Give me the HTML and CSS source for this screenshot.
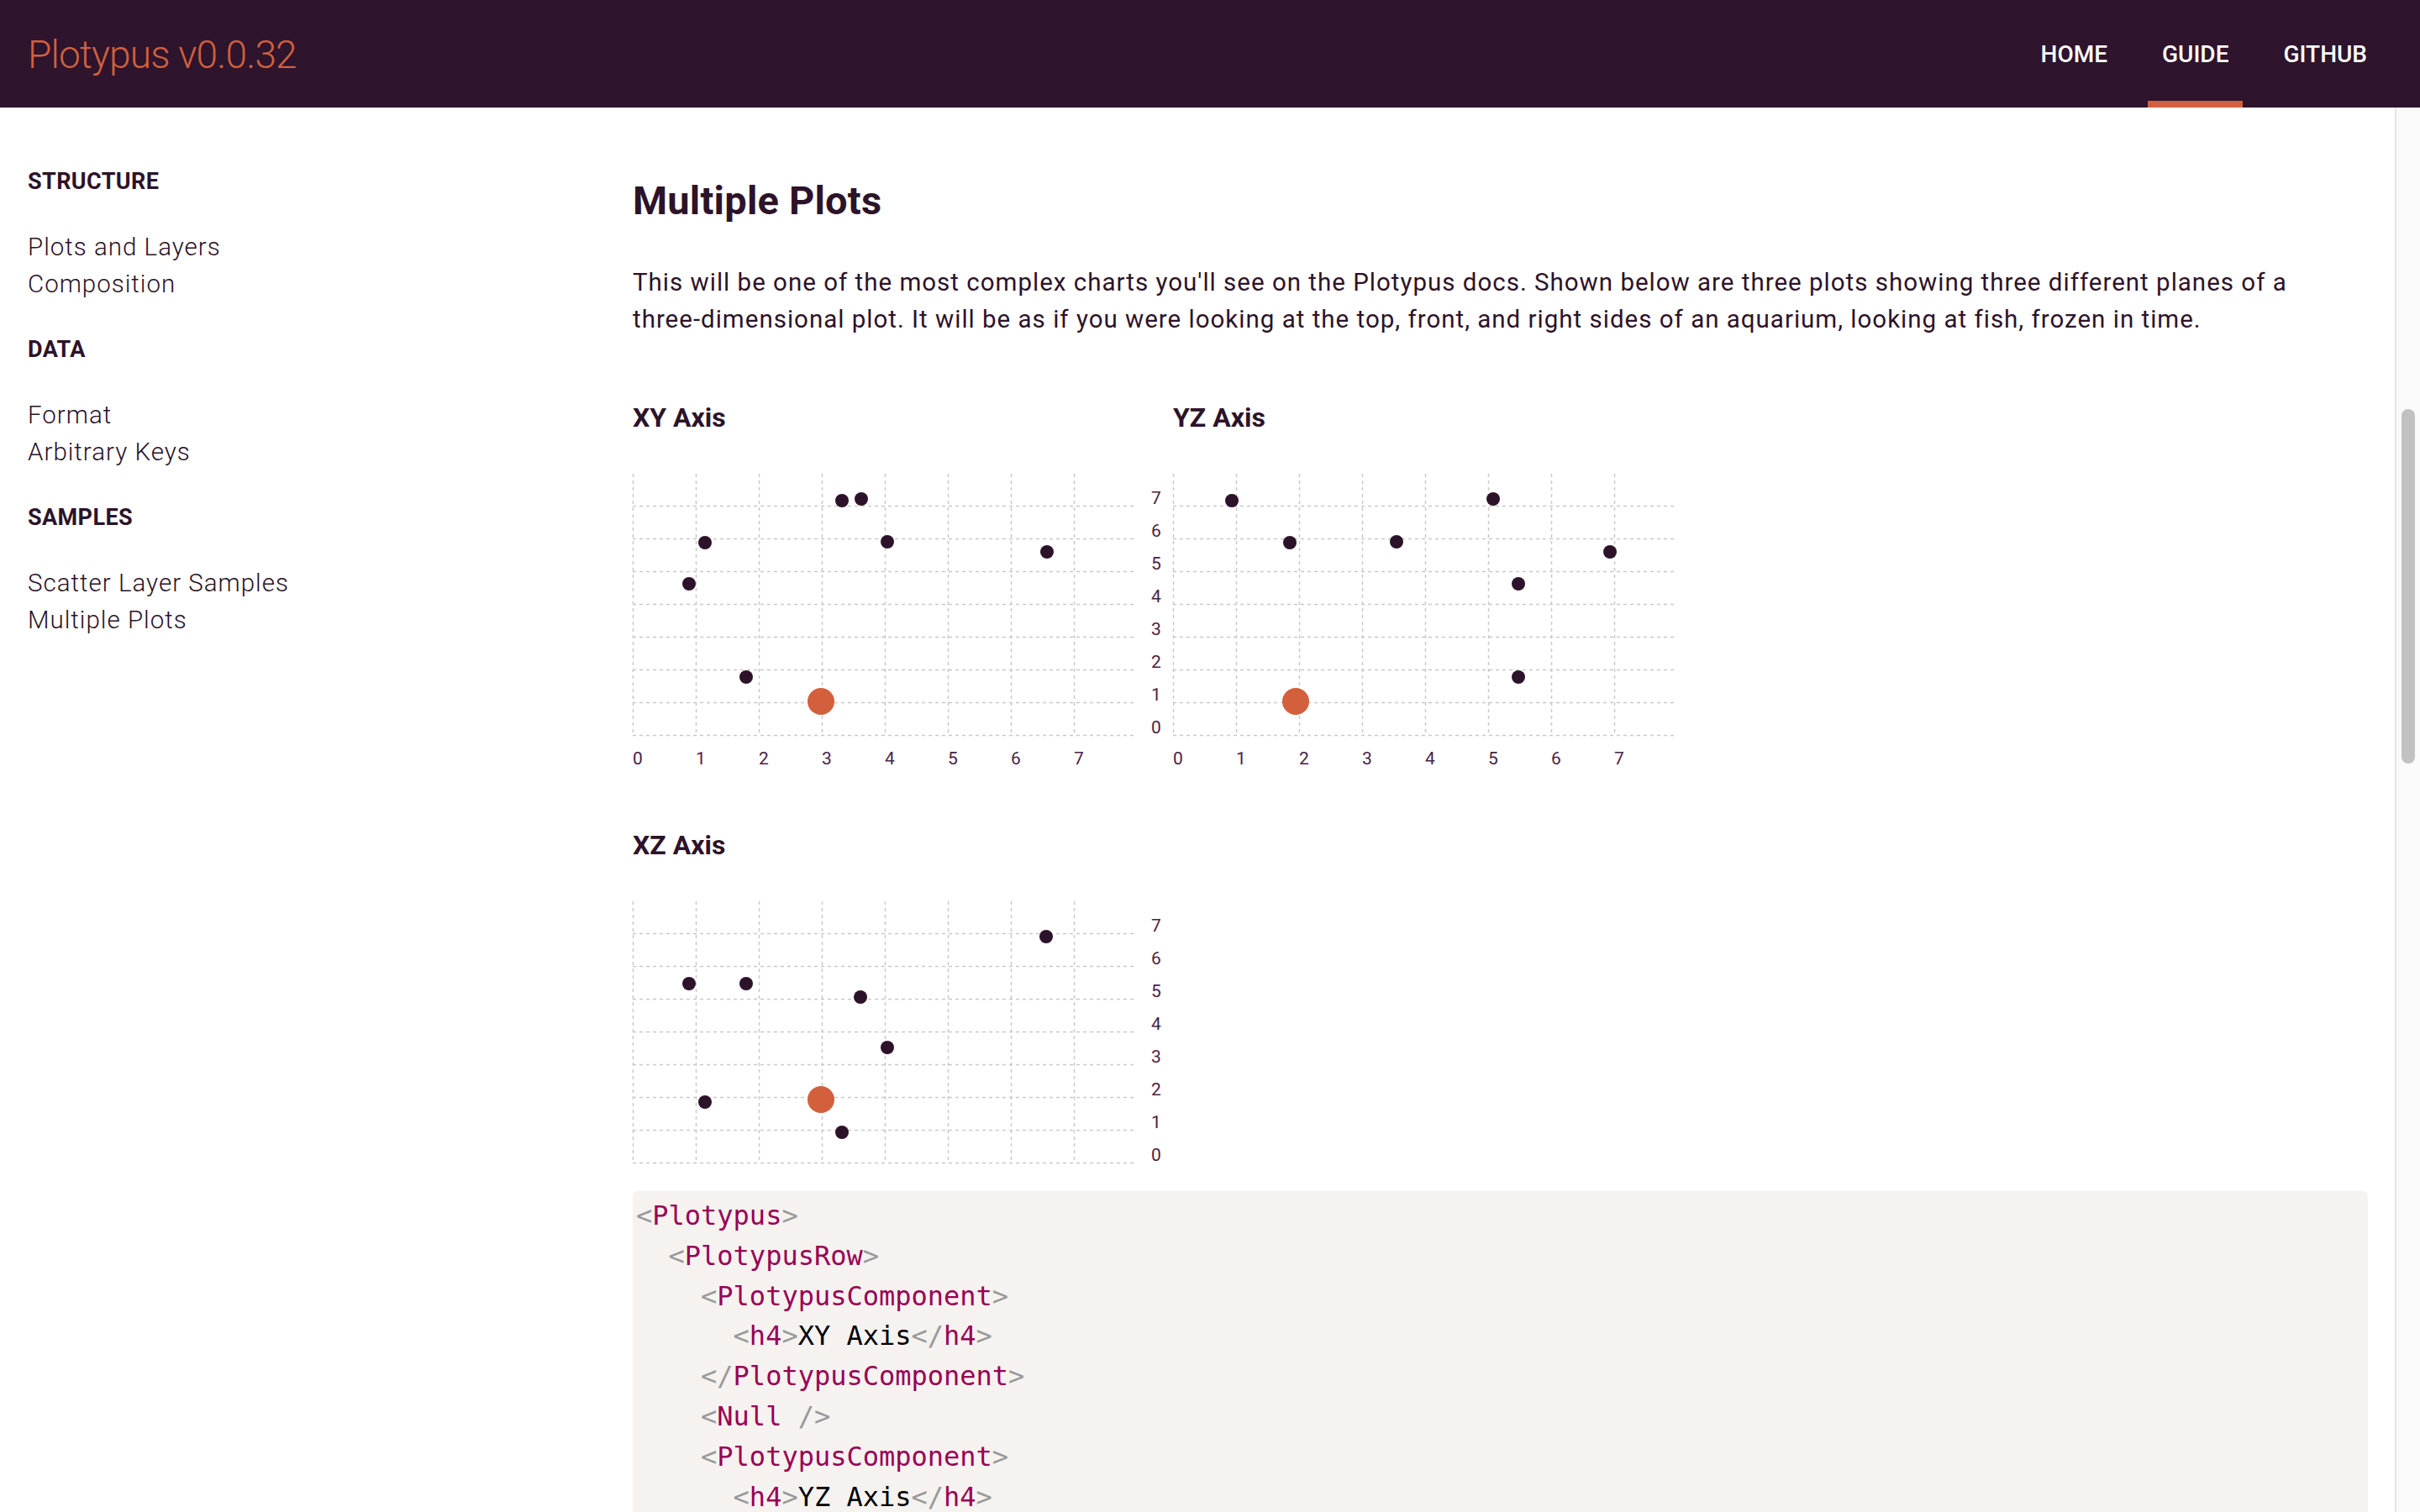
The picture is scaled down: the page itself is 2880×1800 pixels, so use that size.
FILE: index.html
```html
<!DOCTYPE html>
<html lang="en">
<head>
<meta charset="utf-8">
<title>Plotypus – Multiple Plots</title>
<link rel="stylesheet" href="styles.css">
</head>
<body>
<div class="app">
  <header class="topbar">
    <div class="logo">Plotypus v0.0.32</div>
    <nav class="nav">
      <a class="nav-item">HOME</a>
      <a class="nav-item active">GUIDE</a>
      <a class="nav-item">GITHUB</a>
    </nav>
  </header>
  <div class="below">
    <div class="content">
      <aside class="sidebar">
        <div class="group">
          <div class="group-title">STRUCTURE</div>
          <ul class="group-list">
            <li>Plots and Layers</li>
            <li>Composition</li>
          </ul>
        </div>
        <div class="group">
          <div class="group-title">DATA</div>
          <ul class="group-list">
            <li>Format</li>
            <li>Arbitrary Keys</li>
          </ul>
        </div>
        <div class="group">
          <div class="group-title">SAMPLES</div>
          <ul class="group-list">
            <li>Scatter Layer Samples</li>
            <li>Multiple Plots</li>
          </ul>
        </div>
      </aside>
      <main class="main">
        <h1 class="title">Multiple Plots</h1>
        <p class="lead">This will be one of the most complex charts you'll see on the Plotypus docs. Shown below are three plots showing three different planes of a <span class="nowrap">three-dimensional</span> plot. It will be as if you were looking at the top, front, and right sides of an aquarium, looking at fish, frozen in time.</p>

        <div class="plots">
          <div class="plot-row">
            <div class="plot-cell">
              <h4 class="plot-title">XY Axis</h4>
              <svg class="plot" width="643" height="356" viewBox="0 0 643 356">
                <g class="grid">
                  <line x1="0.5" y1="0" x2="0.5" y2="312"/><line x1="75.5" y1="0" x2="75.5" y2="312"/><line x1="150.5" y1="0" x2="150.5" y2="312"/><line x1="225.5" y1="0" x2="225.5" y2="312"/><line x1="300.5" y1="0" x2="300.5" y2="312"/><line x1="375.5" y1="0" x2="375.5" y2="312"/><line x1="450.5" y1="0" x2="450.5" y2="312"/><line x1="525.5" y1="0" x2="525.5" y2="312"/>
                  <line x1="0" y1="311.5" x2="597" y2="311.5"/><line x1="0" y1="272.5" x2="597" y2="272.5"/><line x1="0" y1="233.5" x2="597" y2="233.5"/><line x1="0" y1="194.5" x2="597" y2="194.5"/><line x1="0" y1="155.5" x2="597" y2="155.5"/><line x1="0" y1="116.5" x2="597" y2="116.5"/><line x1="0" y1="77.5" x2="597" y2="77.5"/><line x1="0" y1="38.5" x2="597" y2="38.5"/>
                </g>
                <g class="xlabels">
                  <text x="0" y="346">0</text><text x="75" y="346">1</text><text x="150" y="346">2</text><text x="225" y="346">3</text><text x="300" y="346">4</text><text x="375" y="346">5</text><text x="450" y="346">6</text><text x="525" y="346">7</text>
                </g>
                <g class="ylabels">
                  <text x="617" y="309">0</text><text x="617" y="270">1</text><text x="617" y="231">2</text><text x="617" y="192">3</text><text x="617" y="153">4</text><text x="617" y="114">5</text><text x="617" y="75">6</text><text x="617" y="36">7</text>
                </g>
                <g class="dots">
                  <circle cx="249" cy="32" r="8"/><circle cx="272" cy="30" r="8"/><circle cx="86" cy="82" r="8"/><circle cx="303" cy="81" r="8"/><circle cx="493" cy="93" r="8"/><circle cx="67" cy="131" r="8"/><circle cx="135" cy="242" r="8"/>
                </g>
                <circle class="hot" cx="224" cy="271" r="16"/>
              </svg>
            </div>
            <div class="plot-cell">
              <h4 class="plot-title">YZ Axis</h4>
              <svg class="plot" width="643" height="356" viewBox="0 0 643 356">
                <g class="grid">
                  <line x1="0.5" y1="0" x2="0.5" y2="312"/><line x1="75.5" y1="0" x2="75.5" y2="312"/><line x1="150.5" y1="0" x2="150.5" y2="312"/><line x1="225.5" y1="0" x2="225.5" y2="312"/><line x1="300.5" y1="0" x2="300.5" y2="312"/><line x1="375.5" y1="0" x2="375.5" y2="312"/><line x1="450.5" y1="0" x2="450.5" y2="312"/><line x1="525.5" y1="0" x2="525.5" y2="312"/>
                  <line x1="0" y1="311.5" x2="600" y2="311.5"/><line x1="0" y1="272.5" x2="600" y2="272.5"/><line x1="0" y1="233.5" x2="600" y2="233.5"/><line x1="0" y1="194.5" x2="600" y2="194.5"/><line x1="0" y1="155.5" x2="600" y2="155.5"/><line x1="0" y1="116.5" x2="600" y2="116.5"/><line x1="0" y1="77.5" x2="600" y2="77.5"/><line x1="0" y1="38.5" x2="600" y2="38.5"/>
                </g>
                <g class="xlabels">
                  <text x="0" y="346">0</text><text x="75" y="346">1</text><text x="150" y="346">2</text><text x="225" y="346">3</text><text x="300" y="346">4</text><text x="375" y="346">5</text><text x="450" y="346">6</text><text x="525" y="346">7</text>
                </g>
                <g class="dots">
                  <circle cx="70" cy="32" r="8"/><circle cx="381" cy="30" r="8"/><circle cx="139" cy="82" r="8"/><circle cx="266" cy="81" r="8"/><circle cx="520" cy="93" r="8"/><circle cx="411" cy="131" r="8"/><circle cx="411" cy="242" r="8"/>
                </g>
                <circle class="hot" cx="146" cy="271" r="16"/>
              </svg>
            </div>
          </div>
          <div class="plot-row">
            <div class="plot-cell">
              <h4 class="plot-title">XZ Axis</h4>
              <svg class="plot" width="643" height="314" viewBox="0 0 643 314">
                <g class="grid">
                  <line x1="0.5" y1="0" x2="0.5" y2="312"/><line x1="75.5" y1="0" x2="75.5" y2="312"/><line x1="150.5" y1="0" x2="150.5" y2="312"/><line x1="225.5" y1="0" x2="225.5" y2="312"/><line x1="300.5" y1="0" x2="300.5" y2="312"/><line x1="375.5" y1="0" x2="375.5" y2="312"/><line x1="450.5" y1="0" x2="450.5" y2="312"/><line x1="525.5" y1="0" x2="525.5" y2="312"/>
                  <line x1="0" y1="311.5" x2="597" y2="311.5"/><line x1="0" y1="272.5" x2="597" y2="272.5"/><line x1="0" y1="233.5" x2="597" y2="233.5"/><line x1="0" y1="194.5" x2="597" y2="194.5"/><line x1="0" y1="155.5" x2="597" y2="155.5"/><line x1="0" y1="116.5" x2="597" y2="116.5"/><line x1="0" y1="77.5" x2="597" y2="77.5"/><line x1="0" y1="38.5" x2="597" y2="38.5"/>
                </g>
                <g class="ylabels">
                  <text x="617" y="309">0</text><text x="617" y="270">1</text><text x="617" y="231">2</text><text x="617" y="192">3</text><text x="617" y="153">4</text><text x="617" y="114">5</text><text x="617" y="75">6</text><text x="617" y="36">7</text>
                </g>
                <g class="dots">
                  <circle cx="492" cy="42" r="8"/><circle cx="67" cy="98" r="8"/><circle cx="135" cy="98" r="8"/><circle cx="271" cy="114" r="8"/><circle cx="303" cy="174" r="8"/><circle cx="86" cy="239" r="8"/><circle cx="249" cy="275" r="8"/>
                </g>
                <circle class="hot" cx="224" cy="236" r="16"/>
              </svg>
            </div>
          </div>
        </div>

<pre class="code"><span class="p">&lt;</span><span class="t">Plotypus</span><span class="p">&gt;</span>
  <span class="p">&lt;</span><span class="t">PlotypusRow</span><span class="p">&gt;</span>
    <span class="p">&lt;</span><span class="t">PlotypusComponent</span><span class="p">&gt;</span>
      <span class="p">&lt;</span><span class="t">h4</span><span class="p">&gt;</span>XY Axis<span class="p">&lt;/</span><span class="t">h4</span><span class="p">&gt;</span>
    <span class="p">&lt;/</span><span class="t">PlotypusComponent</span><span class="p">&gt;</span>
    <span class="p">&lt;</span><span class="t">Null</span> <span class="p">/&gt;</span>
    <span class="p">&lt;</span><span class="t">PlotypusComponent</span><span class="p">&gt;</span>
      <span class="p">&lt;</span><span class="t">h4</span><span class="p">&gt;</span>YZ Axis<span class="p">&lt;/</span><span class="t">h4</span><span class="p">&gt;</span>
    <span class="p">&lt;/</span><span class="t">PlotypusComponent</span><span class="p">&gt;</span>
  <span class="p">&lt;/</span><span class="t">PlotypusRow</span><span class="p">&gt;</span>
<span class="p">&lt;/</span><span class="t">Plotypus</span><span class="p">&gt;</span></pre>
      </main>
    </div>
    <div class="scrollbar"><div class="thumb"></div></div>
  </div>
</div>
</body>
</html>
```

FILE: styles.css
```css
html, body {
  margin: 0;
  padding: 0;
  height: 100%;
  overflow: hidden;
  background: #ffffff;
}

body {
  font-family: Roboto, "Noto Sans", "Liberation Sans", sans-serif;
  color: #2d1329;
}

.app {
  height: 100vh;
  display: flex;
  flex-direction: column;
}

/* Header */
.topbar {
  flex: 0 0 128px;
  height: 128px;
  background: #2e142d;
  display: flex;
  justify-content: space-between;
  align-items: stretch;
  padding: 0 46px 0 33px;
}

.logo {
  align-self: center;
  font-family: Roboto, "Liberation Sans", sans-serif;
  font-weight: 300;
  font-size: 46px;
  letter-spacing: -0.8px;
  color: #d2603c;
  line-height: 1;
  padding-top: 2px;
}

.nav {
  display: flex;
  gap: 31px;
}

.nav-item {
  display: flex;
  align-items: center;
  padding: 0 17px;
  color: #ffffff;
  font-family: Roboto, sans-serif;
  font-weight: 500;
  font-size: 28px;
  text-decoration: none;
}

.nav-item.active {
  box-shadow: inset 0 -8px 0 #d2603c;
}

/* Below header */
.below {
  flex: 1 1 auto;
  min-height: 0;
  display: flex;
}

.content {
  flex: 1 1 auto;
  min-width: 0;
  display: flex;
  padding: 0 32px 0 33px;
  overflow: hidden;
}

/* Sidebar */
.sidebar {
  flex: 0 0 720px;
  padding-top: 66px;
}

.group-title {
  font-weight: 700;
  font-size: 27px;
  letter-spacing: 0.4px;
  line-height: 44px;
  color: #2d1329;
}

.group-list {
  list-style: none;
  margin: 34px 0 34px 0;
  padding: 0;
}

.group-list li {
  font-weight: 300;
  font-size: 29.5px;
  letter-spacing: 1px;
  line-height: 44px;
  color: #2a1126;
}

/* Main */
.main {
  flex: 1 1 auto;
  min-width: 0;
  padding-top: 83px;
}

.title {
  margin: 0;
  font-weight: 700;
  font-size: 47px;
  letter-spacing: 0.2px;
  line-height: 56px;
  color: #2d1329;
}

.lead {
  margin: 47px 0 0 0;
  font-weight: 400;
  font-size: 29.5px;
  letter-spacing: 1px;
  line-height: 44px;
  color: #2d1329;
}

.nowrap {
  white-space: nowrap;
}

.plots {
  margin-top: 73px;
  display: flex;
  flex-direction: column;
  gap: 64px;
}

.plot-row {
  display: flex;
}

.plot-cell {
  width: 643px;
  display: flex;
  flex-direction: column;
}

.plot-title {
  margin: 0 0 45px 0;
  font-weight: 700;
  font-size: 32px;
  line-height: 44px;
  color: #2d1329;
}

.plot {
  display: block;
  overflow: visible;
}

.grid line {
  stroke: #c9c9c9;
  stroke-width: 1.5;
  stroke-dasharray: 4 4;
}

.xlabels text,
.ylabels text {
  font-family: Roboto, sans-serif;
  font-size: 21px;
  fill: #4a2245;
}

.dots circle {
  fill: #2d1329;
}

.hot {
  fill: #d2603c;
}

/* Code */
.code {
  margin: 31px 0 0 0;
  padding: 6px 4px;
  background: #f5f2f0;
  border-radius: 6px;
  font-family: "DejaVu Sans Mono", "Liberation Mono", monospace;
  font-size: 32px;
  line-height: 47.8px;
  color: #000000;
  white-space: pre;
  overflow: hidden;
}

.code .p {
  color: #999999;
}

.code .t {
  color: #990055;
}

/* Fake overlay scrollbar */
.scrollbar {
  flex: 0 0 30px;
  width: 30px;
  background: #fafafa;
  border-left: 2px solid #e6e6e6;
  box-sizing: border-box;
  display: flex;
  flex-direction: column;
  align-items: center;
}

.thumb {
  margin-top: 359px;
  width: 16px;
  height: 422px;
  border-radius: 8px;
  background: #c1c1c1;
}
```
